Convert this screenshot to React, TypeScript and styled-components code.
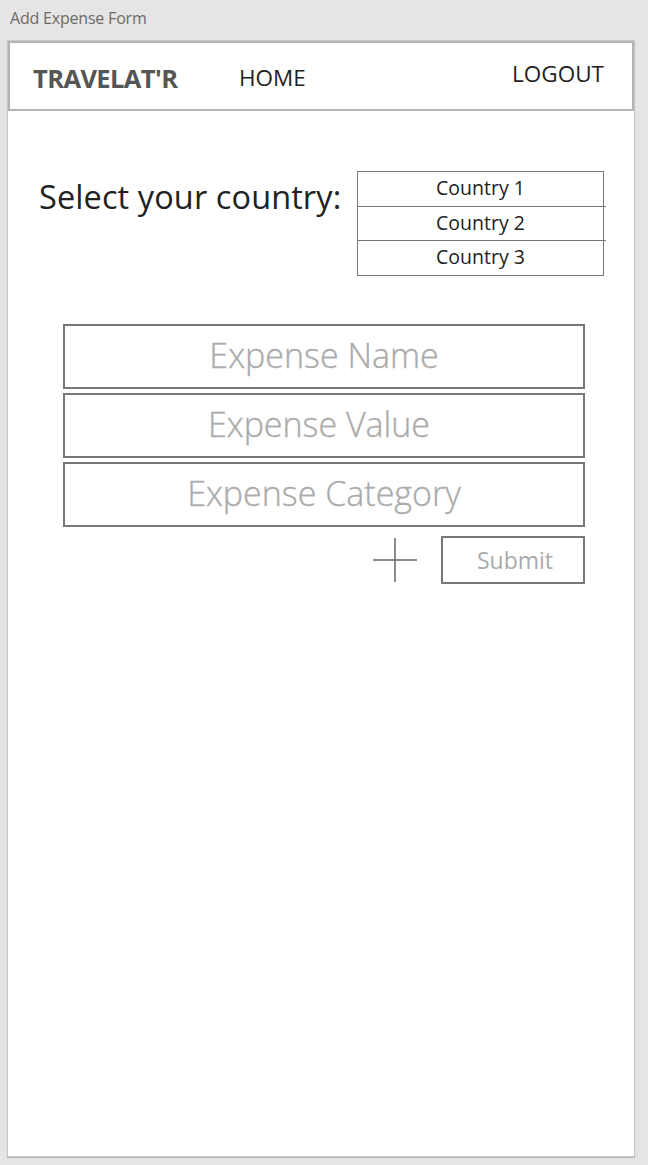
import React from 'react'
import styled, { createGlobalStyle } from 'styled-components'

const GlobalStyle = createGlobalStyle`
    html, body {
        margin: 0;
        padding: 0;
        background: #e5e5e5;
        font-family: 'Open Sans', 'Noto Sans', sans-serif;
    }
`

const Page = styled.div`
    display: flex;
    flex-direction: column;
    height: 1165px;
    padding: 0 13px 8px 7px;
    box-sizing: border-box;
`

const WindowTitle = styled.div`
    height: 40px;
    padding-left: 3px;
    display: flex;
    align-items: center;
    padding-bottom: 5px;
    box-sizing: border-box;
    font-size: 16px;
    color: #6b6b6b;
    letter-spacing: -0.2px;
`

const Frame = styled.div`
    flex: 1;
    display: flex;
    flex-direction: column;
    background: #fff;
    border: 1px solid #c8c8c8;
    box-shadow: 0 1px 1px #bbb;
`

const Header = styled.header`
    height: 70px;
    box-sizing: border-box;
    border: 2px solid #b3b3b3;
    display: flex;
    align-items: center;
    padding: 0 28px 0 23px;
`

const Brand = styled.div`
    font-size: 25.5px;
    font-weight: 700;
    color: #555;
    letter-spacing: -0.6px;
    margin-top: 4px;
    width: 206px;
`

const NavLink = styled.div<{ $push?: boolean; $offset?: number }>`
    font-size: 22.5px;
    color: #222;
    margin-left: ${(p) => (p.$push ? 'auto' : '0')};
    margin-top: ${(p) => p.$offset ?? 0}px;
`

const Content = styled.main`
    display: flex;
    flex-direction: column;
    padding: 60px 30px 0 31px;
`

const CountryRow = styled.div`
    display: flex;
    align-items: flex-start;
    justify-content: space-between;
`

const CountryLabel = styled.div`
    font-size: 32.5px;
    color: #222;
    margin-top: 3px;
    letter-spacing: 0.1px;
`

const CountryList = styled.ul`
    list-style: none;
    margin: 0;
    padding: 0;
    width: 247px;
    height: 105px;
    display: flex;
    flex-direction: column;
    border: 1.5px solid #777;
    box-sizing: border-box;
`

const CountryItem = styled.li`
    flex: 1;
    box-sizing: border-box;
    display: flex;
    align-items: center;
    justify-content: center;
    padding-bottom: 3px;
    font-size: 19.5px;
    color: #222;
    & + & {
        border-top: 1.5px solid #777;
        margin-right: -3px;
        padding-right: 3px;
    }
`

const Form = styled.form`
    display: flex;
    flex-direction: column;
    gap: 4px;
    margin: 48px 19px 0 24px;
`

const Field = styled.div<{ $shift?: number }>`
    height: 65px;
    box-sizing: border-box;
    border: 2px solid #777;
    display: flex;
    align-items: center;
    justify-content: center;
    padding-bottom: 4px;
    padding-right: ${(p) => (p.$shift ?? 0) * 2}px;
    font-size: 34px;
    color: #ababab;
    font-weight: 300;
    -webkit-text-stroke: 0.35px #ababab;
`

const Actions = styled.div`
    display: flex;
    justify-content: flex-end;
    align-items: center;
    gap: 24px;
    margin-top: 5px;
`

const PlusIcon = styled.svg`
    width: 44px;
    height: 44px;
`

const SubmitButton = styled.div`
    width: 144px;
    height: 48px;
    box-sizing: border-box;
    border: 2px solid #777;
    display: flex;
    align-items: center;
    justify-content: center;
    padding-left: 4px;
    font-size: 23px;
    color: #aaa;
`

export default function App() {
    return (
        <>
            <GlobalStyle />
            <Page>
                <WindowTitle>Add Expense Form</WindowTitle>
                <Frame>
                    <Header>
                        <Brand>TRAVELAT'R</Brand>
                        <NavLink $offset={2}>HOME</NavLink>
                        <NavLink $push $offset={-6}>
                            LOGOUT
                        </NavLink>
                    </Header>
                    <Content>
                        <CountryRow>
                            <CountryLabel>Select your country:</CountryLabel>
                            <CountryList>
                                <CountryItem>Country 1</CountryItem>
                                <CountryItem>Country 2</CountryItem>
                                <CountryItem>Country 3</CountryItem>
                            </CountryList>
                        </CountryRow>
                        <Form>
                            <Field>Expense Name</Field>
                            <Field $shift={5}>Expense Value</Field>
                            <Field>Expense Category</Field>
                            <Actions>
                                <PlusIcon viewBox="0 0 44 44">
                                    <path d="M22 0V44M0 22H44" stroke="#666" strokeWidth="1.5" fill="none" />
                                </PlusIcon>
                                <SubmitButton>Submit</SubmitButton>
                            </Actions>
                        </Form>
                    </Content>
                </Frame>
            </Page>
        </>
    )
}
